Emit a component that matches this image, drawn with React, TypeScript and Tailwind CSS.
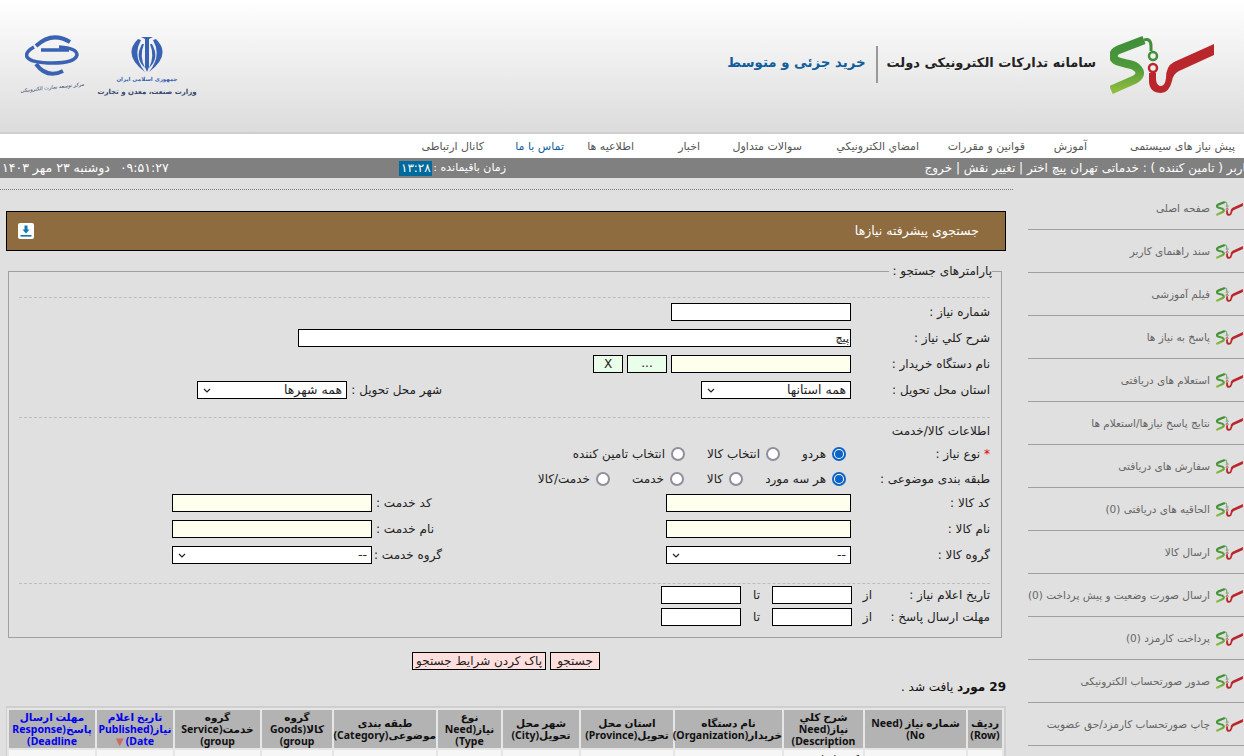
const font = "font-['DejaVu_Sans',sans-serif]";

function Logo({ className }: { className: string }) {
  return (
    <svg viewBox="9 2 104 58" className={className} fill="none">
      <defs>
        <linearGradient id="lg" x1="0" y1="0" x2="0" y2="1">
          <stop offset="0" stopColor="#3f8f3a" />
          <stop offset="0.55" stopColor="#4f9a3a" />
          <stop offset="1" stopColor="#8dbb3e" />
        </linearGradient>
      </defs>
      <path d="M10 56L33 46Q42 41 37 35Q34 31 27 30L19 28Q11 26 13 20Q13 18 17 16L43 6" stroke="url(#lg)" strokeWidth="8.5" />
      <path d="M43 6Q50 4 50 12V17" stroke="#3f8f3a" strokeWidth="3" />
      <circle cx="52" cy="22" r="4" stroke="#3f8f3a" strokeWidth="2.5" />
      <circle cx="52" cy="34" r="4" stroke="#b9272c" strokeWidth="2.5" />
      <path d="M113 10V21L78 37Q72 40 71 47Q68 59 60 59Q49 59 48 48V39H55V46Q56 52 60 52Q64 52 65 44Q65 32 73 28Z" fill="#b9272c" />
    </svg>
  );
}

const menu = [
  { label: "پیش نیاز های سیستمی", w: "w-[148px]" },
  { label: "آموزش", w: "w-[62px]" },
  { label: "قوانین و مقررات", w: "w-[106px]" },
  { label: "امضاي الکترونیکي", w: "w-[117px]" },
  { label: "سوالات متداول", w: "w-[102px]" },
  { label: "اخبار", w: "w-[66px]" },
  { label: "اطلاعیه ها", w: "w-[70px]" },
  { label: "تماس با ما", w: "w-[80px]" },
  { label: "کانال ارتباطی", w: "w-[60px]" },
];

const sideItems = [
  "صفحه اصلی",
  "سند راهنمای کاربر",
  "فیلم آموزشی",
  "پاسخ به نیاز ها",
  "استعلام های دریافتی",
  "نتایج پاسخ نیازها/استعلام ها",
  "سفارش های دریافتی",
  "الحاقیه های دریافتی (0)",
  "ارسال کالا",
  "ارسال صورت وضعیت و پیش پرداخت (0)",
  "پرداخت کارمزد (0)",
  "صدور صورتحساب الکترونیکی",
  "چاپ صورتحساب کارمزد/حق عضویت",
];

const columns = [
  { w: "w-[34px]", label: "ردیف (Row)" },
  { w: "w-[101px]", label: "شماره نیاز (Need No)" },
  { w: "w-[79px]", label: "شرح کلي نیاز(Need Description)" },
  { w: "w-[107px]", label: "نام دستگاه خریدار(Organization)" },
  { w: "w-[92px]", label: "استان محل تحویل(Province)" },
  { w: "w-[76px]", label: "شهر محل تحویل(City)" },
  { w: "w-[63px]", label: "نوع نیاز(Need Type)" },
  { w: "w-[102px]", label: "طبقه بندی موضوعی(Category)" },
  { w: "w-[70px]", label: "گروه کالا(Goods group)" },
  { w: "w-[85px]", label: "گروه خدمت(Service group)" },
  { w: "w-[76px]", label: "تاریخ اعلام نیاز(Published Date)", link: true, sorted: true },
  { w: "w-[86px]", label: "مهلت ارسال پاسخ(Response Deadline)", link: true },
];

function Label({ children, className = "" }: { children: React.ReactNode; className?: string }) {
  return <span className={`text-[12px] leading-[18px] text-[#222] ${className}`}>{children}</span>;
}

function Input({ className = "", value = "", bg = "bg-white" }: { className?: string; value?: string; bg?: string }) {
  return (
    <div className={`h-[18px] border border-black text-[11px] leading-[17px] px-px overflow-hidden ${bg} ${className}`}>
      {value}
    </div>
  );
}

function Select({ className = "", value }: { className?: string; value: string }) {
  return (
    <div className={`h-[18px] border border-black bg-white flex items-center justify-between pr-[4px] pl-[5px] text-[12.5px] ${className}`}>
      <span>{value}</span>
      <svg width="8" height="5" viewBox="0 0 8 5" fill="none" stroke="#222" strokeWidth="1.2">
        <path d="M1 1l3 3 3-3" />
      </svg>
    </div>
  );
}

function Radio({ checked, label, className = "" }: { checked?: boolean; label: string; className?: string }) {
  return (
    <div className={`flex items-center gap-[6px] ${className}`}>
      {checked ? (
        <span className="w-[14px] h-[14px] rounded-full border-2 border-[#0b63c5] bg-white flex items-center justify-center">
          <span className="w-[8px] h-[8px] rounded-full bg-[#0b63c5]" />
        </span>
      ) : (
        <span className="w-[14px] h-[14px] rounded-full border-2 border-[#8f8f9d] bg-white" />
      )}
      <Label>{label}</Label>
    </div>
  );
}

function Row({ className = "", children }: { className?: string; children: React.ReactNode }) {
  return <div className={`flex items-center h-[18px] ${className}`}>{children}</div>;
}

function TwoCol({ label1, label2, input1, input2, className = "" }: { label1: string; label2: string; input1: React.ReactNode; input2: React.ReactNode; className?: string }) {
  return (
    <Row className={className}>
      <Label className="w-[139px]">{label1}</Label>
      {input1}
      <Label className="w-[70px] mr-[224px] pl-[4px] text-left whitespace-nowrap">{label2}</Label>
      {input2}
    </Row>
  );
}

function DateRow({ label, className = "" }: { label: string; className?: string }) {
  return (
    <Row className={className}>
      <Label className="w-[118px]">{label}</Label>
      <Label className="w-[20px]">از</Label>
      <Input className="w-[80px]" />
      <Label className="w-[31px] text-center">تا</Label>
      <Input className="w-[80px]" />
    </Row>
  );
}

export default function App() {
  return (
    <div dir="rtl" className={`h-screen overflow-hidden bg-[#e0e0e0] text-[#222] ${font}`}>
      {/* Header */}
      <header className="h-[134px] border-b-2 border-[#cfcfcf] bg-gradient-to-b from-white to-[#dcdcdc] flex items-start">
        <Logo className="w-[104px] h-[58px] mt-[36px] mr-[30px]" />
        <div className="text-[13px] font-bold text-[#222] mt-[52px] mr-[14px] leading-[22px]">سامانه تدارکات الکترونیکی دولت</div>
        <div className="w-[2px] h-[37px] bg-[#999] mt-[46px] mr-[9px]" />
        <div className="text-[13.3px] font-bold text-[#0f5f9e] mt-[52px] mr-[10px] leading-[22px]">خرید جزئی و متوسط</div>
        <div className="flex mr-auto ml-[19px] mt-[34px] gap-[12px] items-start">
          <div className="flex flex-col items-center w-[100px] pt-[2px]">
            <svg viewBox="117 8 38 36" className="w-[38px] h-[36px]" fill="#3a62b2">
              <path d="M127 11Q111 27 134 44Q121 28 130 12Z" />
              <path d="M145 11Q161 27 138 44Q151 28 142 12Z" />
              <path d="M131 16Q123 30 134 40Q128 28 133 16Z" />
              <path d="M141 16Q149 30 138 40Q144 28 139 16Z" />
              <path d="M130 9H142L138 11V39L136 44L134 39V11Z" />
            </svg>
            <div className="text-[5.5px] font-bold text-[#3a62b2] mt-[2px] leading-[10px] whitespace-nowrap">جمهوری اسلامی ایران</div>
            <div className="text-[7px] font-bold text-[#34466e] mt-[1px] leading-[14px] whitespace-nowrap">وزارت صنعت، معدن و تجارت</div>
          </div>
          <div className="flex flex-col items-center w-[66px]">
            <svg viewBox="0 0 54 42" className="w-[54px] h-[42px]" fill="none" stroke="#3a62b2">
              <path d="M45 8Q27 -3 11 12" strokeWidth="4" />
              <path d="M38 37Q22 45 11 30" strokeWidth="4" />
              <path d="M16 16H44" strokeWidth="3.5" />
              <path d="M34 13Q52 14 52 21Q50 29 28 29Q6 29 2 23Q0 18 9 13" strokeWidth="3.5" />
            </svg>
            <div className="text-[5px] italic text-[#34466e] mt-[4px] leading-[14px] whitespace-nowrap -rotate-6">مرکز توسعه تجارت الکترونیکی</div>
          </div>
        </div>
      </header>

      {/* Menu */}
      <nav className="h-[24px] bg-white flex items-center pr-[9px] pt-[3px] text-[11px] text-[#555] whitespace-nowrap">
        {menu.map((m, i) => (
          <span key={m.label} className={`${m.w} shrink-0 ${i === 7 ? "text-[#0f5f9e]" : ""}`}>{m.label}</span>
        ))}
      </nav>

      {/* Status bar */}
      <div className="h-[20px] bg-[#808080] text-white text-[12px] flex items-center overflow-hidden whitespace-nowrap">
        <span className="-mr-[8px] w-[330px] shrink-0">کاربر ( تامین کننده ) : خدماتی تهران پیچ اختر | تغییر نقش | خروج</span>
        <span className="mr-[416px] text-[11px]">زمان باقیمانده :</span>
        <span className="bg-[#006a9c] h-[15px] w-[33px] mr-[1px] text-[12px] leading-[15px] text-center">۱۳:۲۸</span>
        <span className="mr-auto ml-[2px] flex gap-[10px] text-[12.5px]">
          <span>۰۹:۵۱:۲۷</span>
          <span>دوشنبه ۲۳ مهر ۱۴۰۳</span>
        </span>
      </div>

      <div className="flex items-start">
        {/* Sidebar */}
        <aside className="w-[216px] shrink-0 mt-[9px]">
          {sideItems.map((s) => (
            <div key={s} className="h-[43px] border-b border-[#a0a0a0] flex items-center pt-[1px] gap-[6px] text-[10.5px] text-[#666] whitespace-nowrap">
              <Logo className="w-[27px] h-[15px] mr-[1px] shrink-0" />
              <span>{s}</span>
            </div>
          ))}
        </aside>

        {/* Main */}
        <main className="flex-1 min-w-0">
          <div className="border-b border-dotted border-[#777] h-[12px] mr-[15px]" />
          <div className="mr-[22px] ml-[6px] mt-[21px] h-[40px] bg-[#8e6c40] border border-black flex items-center justify-between pr-[26px] pl-[11px] text-white text-[12.5px]">
            <span>جستجوی پیشرفته نیازها</span>
            <span className="w-[16px] h-[16px] bg-white rounded-[2px] flex items-center justify-center">
              <svg width="12" height="12" viewBox="0 0 12 12" fill="#0f7ab5">
                <path d="M4.5 0.5h3v4h2L6 8.5 2.5 4.5h2z" />
                <rect x="0.5" y="10" width="11" height="1.6" />
              </svg>
            </span>
          </div>

          <fieldset className="mr-[26px] ml-[8px] mt-[13px] h-[374px] border border-[#a0a0a0] pr-[11px] pl-[10px]">
            <legend className="-mr-[2px] pl-[3px] text-[12px] leading-[14px] text-[#222]">پارامترهای جستجو :</legend>
            <div className="border-b border-dashed border-[#bdbdbd] mt-[19px]" />
            <Row className="mt-[5px]">
              <Label className="w-[139px]">شماره نیاز :</Label>
              <Input className="w-[180px]" />
            </Row>
            <Row className="mt-[8px]">
              <Label className="w-[139px]">شرح کلي نیاز :</Label>
              <Input className="w-[553px]" value="پیچ" />
            </Row>
            <Row className="mt-[8px]">
              <Label className="w-[139px]">نام دستگاه خریدار :</Label>
              <Input className="w-[180px]" bg="bg-[#ffffee]" />
              <div className="w-[40px] h-[18px] mr-[4px] border border-black bg-[#e9ffe9] text-[12px] text-center leading-[15px]">...</div>
              <div className="w-[30px] h-[18px] mr-[4px] border border-black bg-[#e9ffe9] text-[12px] text-center leading-[16px]">X</div>
            </Row>
            <Row className="mt-[8px]">
              <Label className="w-[139px]">استان محل تحویل :</Label>
              <Select className="w-[150px]" value="همه استانها" />
              <Label className="mr-[259px] w-[95px] whitespace-nowrap">شهر محل تحویل :</Label>
              <Select className="w-[150px]" value="همه شهرها" />
            </Row>
            <div className="border-b border-dashed border-[#bdbdbd] mt-[18px]" />
            <Label className="block mt-[4px]">اطلاعات کالا/خدمت</Label>
            <Row className="mt-[5px]">
              <Label className="w-[144px]"><span className="text-[#d00]">*</span> نوع نیاز :</Label>
              <Radio checked label="هردو" className="w-[66px]" />
              <Radio label="انتخاب کالا" className="w-[95px]" />
              <Radio label="انتخاب تامین کننده" />
            </Row>
            <Row className="mt-[7px]">
              <Label className="w-[144px]">طبقه بندی موضوعی :</Label>
              <Radio checked label="هر سه مورد" className="w-[103px]" />
              <Radio label="کالا" className="w-[59px]" />
              <Radio label="خدمت" className="w-[74px]" />
              <Radio label="خدمت/کالا" />
            </Row>
            <TwoCol className="mt-[6px]" label1="کد کالا :" label2="کد خدمت :" input1={<Input className="w-[185px]" bg="bg-[#ffffee]" />} input2={<Input className="w-[200px]" bg="bg-[#ffffee]" />} />
            <TwoCol className="mt-[8px]" label1="نام کالا :" label2="نام خدمت :" input1={<Input className="w-[185px]" bg="bg-[#ffffee]" />} input2={<Input className="w-[200px]" bg="bg-[#ffffee]" />} />
            <TwoCol className="mt-[8px]" label1="گروه کالا :" label2="گروه خدمت :" input1={<Select className="w-[185px]" value="--" />} input2={<Select className="w-[200px]" value="--" />} />
            <div className="border-b border-dashed border-[#bdbdbd] mt-[19px]" />
            <DateRow className="mt-[2px]" label="تاریخ اعلام نیاز :" />
            <DateRow className="mt-[4px]" label="مهلت ارسال پاسخ :" />
          </fieldset>

          <div className="flex justify-center gap-[4px] mt-[14px] mr-[16px]">
            <button className="h-[18px] w-[50px] border border-black bg-[#ffdede] text-[12px] leading-[15px]">جستجو</button>
            <button className="h-[18px] w-[134px] border border-black bg-[#ffdede] text-[12px] leading-[15px]">پاک کردن شرایط جستجو</button>
          </div>

          <div className="mt-[8px] mr-[22px] text-[12px] leading-[18px] text-[#111]">
            <b>29 مورد</b> یافت شد .
          </div>

          <div className="mt-[10px] mr-[22px] ml-[6px] border-y-2 border-r-2 border-l border-[#cfcfcf] bg-[#cfcfcf]">
            <table className="table-fixed w-[997px] border-separate border-spacing-[2px] bg-[#e6e6e6] font-['Noto_Sans','DejaVu_Sans',sans-serif] text-[10.5px] font-bold leading-[12px]">
              <thead>
                <tr>
                  {columns.map((c) => (
                    <th key={c.label} className={`${c.w} h-[38px] bg-[#b3b3b3] p-0 font-bold text-center align-middle ${c.link ? "text-[#0000ee]" : "text-[#111]"}`}>
                      {c.label}
                      {c.sorted && <span className="text-[#c96a6a] text-[10px] mr-[2px]">▼</span>}
                    </th>
                  ))}
                </tr>
              </thead>
              <tbody>
                <tr>
                  {columns.map((c, i) => (
                    <td key={c.label} className="h-[30px] bg-[#f6f6f6] font-normal align-top text-right pr-[4px] pt-[3px] text-[11px] text-[#222]">
                      {i === 2 ? "کیف ابزار" : ""}
                    </td>
                  ))}
                </tr>
              </tbody>
            </table>
          </div>
        </main>
      </div>
    </div>
  );
}
